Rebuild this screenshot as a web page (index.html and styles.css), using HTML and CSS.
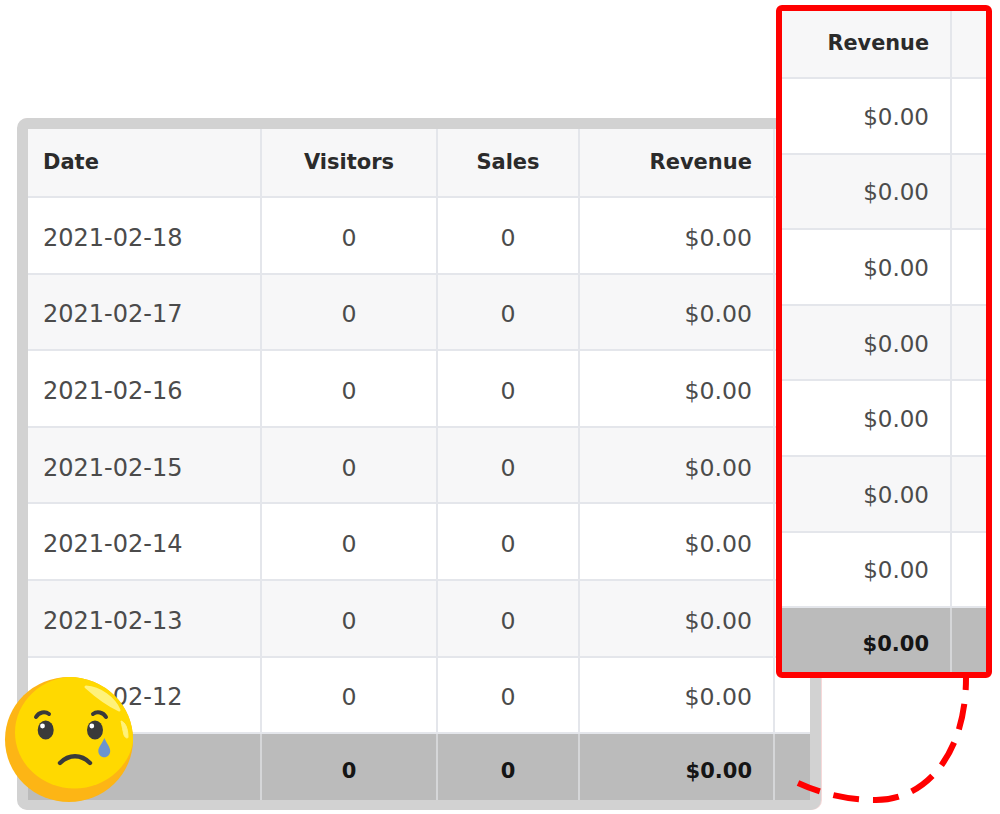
FILE: index.html
```html
<!DOCTYPE html>
<html lang="en">
<head>
<meta charset="utf-8">
<title>Report</title>
<link rel="stylesheet" href="styles.css">
</head>
<body>
<main class="stage">
  <section class="frame">
    <div class="row head"><div class="cell date">Date</div><div class="cell vis">Visitors</div><div class="cell sal">Sales</div><div class="cell rev">Revenue</div><div class="cell end"></div></div>
    <div class="row"><div class="cell date">2021-02-18</div><div class="cell vis">0</div><div class="cell sal">0</div><div class="cell rev">$0.00</div><div class="cell end"></div></div>
    <div class="row alt"><div class="cell date">2021-02-17</div><div class="cell vis">0</div><div class="cell sal">0</div><div class="cell rev">$0.00</div><div class="cell end"></div></div>
    <div class="row"><div class="cell date">2021-02-16</div><div class="cell vis">0</div><div class="cell sal">0</div><div class="cell rev">$0.00</div><div class="cell end"></div></div>
    <div class="row alt"><div class="cell date">2021-02-15</div><div class="cell vis">0</div><div class="cell sal">0</div><div class="cell rev">$0.00</div><div class="cell end"></div></div>
    <div class="row"><div class="cell date">2021-02-14</div><div class="cell vis">0</div><div class="cell sal">0</div><div class="cell rev">$0.00</div><div class="cell end"></div></div>
    <div class="row alt"><div class="cell date">2021-02-13</div><div class="cell vis">0</div><div class="cell sal">0</div><div class="cell rev">$0.00</div><div class="cell end"></div></div>
    <div class="row"><div class="cell date">2021-02-12</div><div class="cell vis">0</div><div class="cell sal">0</div><div class="cell rev">$0.00</div><div class="cell end"></div></div>
    <div class="row foot"><div class="cell date"></div><div class="cell vis">0</div><div class="cell sal">0</div><div class="cell rev">$0.00</div><div class="cell end"></div></div>
  </section>

  <svg class="curve" viewBox="0 0 1000 814" aria-hidden="true">
    <path d="M966 678C966 755 925 800 876 800C848 800 822 794 798 783" />
  </svg>

  <aside class="zoom">
    <div class="zrow head"><div class="cell zrev">Revenue</div><div class="cell zend"></div></div>
    <div class="zrow"><div class="cell zrev">$0.00</div><div class="cell zend"></div></div>
    <div class="zrow alt"><div class="cell zrev">$0.00</div><div class="cell zend"></div></div>
    <div class="zrow"><div class="cell zrev">$0.00</div><div class="cell zend"></div></div>
    <div class="zrow alt"><div class="cell zrev">$0.00</div><div class="cell zend"></div></div>
    <div class="zrow"><div class="cell zrev">$0.00</div><div class="cell zend"></div></div>
    <div class="zrow alt"><div class="cell zrev">$0.00</div><div class="cell zend"></div></div>
    <div class="zrow"><div class="cell zrev">$0.00</div><div class="cell zend"></div></div>
    <div class="zrow foot"><div class="cell zrev">$0.00</div><div class="cell zend"></div></div>
  </aside>

  <svg class="emoji" viewBox="0 660 160 154" aria-hidden="true">
    <defs><clipPath id="face"><ellipse cx="69" cy="739.5" rx="64" ry="62.5"/></clipPath></defs>
    <ellipse cx="69" cy="739.5" rx="64" ry="62.5" fill="#fdb515"/>
    <ellipse cx="74.5" cy="732.5" rx="59.5" ry="56" fill="#ffd900" clip-path="url(#face)"/>
    <path d="M86 687C100 688 114 698 119 710C108 705 96 696 86 687Z" fill="#fff27a" stroke="#fff27a" stroke-width="3" stroke-linejoin="round"/>
    <path d="M121 721C125 722 128 728 128 737C128 739 125 738 124 735C123 731 122 726 121 721Z" fill="#fff27a" stroke="#fff27a" stroke-linejoin="round"/>
    <ellipse cx="45.7" cy="730" rx="8" ry="9.5" fill="#3a3a3a"/>
    <ellipse cx="95" cy="730" rx="8" ry="9.5" fill="#3a3a3a"/>
    <circle cx="42.5" cy="726" r="2.4" fill="#fff"/>
    <circle cx="91.8" cy="726" r="2.4" fill="#fff"/>
    <path d="M36 717C39 712 45 711 49 714M93 714C97 711 103 712 106 717" fill="none" stroke="#3a3a3a" stroke-width="4" stroke-linecap="round"/>
    <path d="M60 763C69 754 81 754 90 763" fill="none" stroke="#3a3a3a" stroke-width="4.4" stroke-linecap="round"/>
    <path d="M104.3 738C107 744 110.2 747 110.2 751C110.2 754.5 107.5 757.3 104.3 757.3C101 757.3 98.3 754.5 98.3 751C98.3 747 102 744 104.3 738Z" fill="#6c94cc"/>
  </svg>
</main>
</body>
</html>
```
FILE: styles.css
```css
* { box-sizing: border-box; }
html, body { margin: 0; padding: 0; background: #fff; }
body { font-family: "DejaVu Sans", sans-serif; color: #4b4b4b; font-size: 23.6px; }

.stage { position: relative; width: 1000px; height: 814px; padding: 118px 0 0 17px; overflow: hidden; }

.frame {
  width: 804px;
  height: 692px;
  border: 11px solid #d2d2d2;
  border-radius: 10px;
  background: #fff;
  box-shadow: 1px 0 0 #f6d8d8;
}

.row { display: flex; height: 76.6px; }
.row.head { height: 69px; }
.row.foot { height: 65.8px; }
.row.alt, .zrow.alt, .head { background: #f7f7f8; }
.foot { background: #bbbbbb; }

.cell {
  display: flex;
  align-items: center;
  padding-top: 5px;
  border-right: 2px solid #e4e6eb;
  border-bottom: 2px solid #e4e6eb;
}
.head .cell { font-size: 21px; font-weight: 700; color: #2b2b2b; padding-top: 0; padding-bottom: 1px; }
.foot .cell { font-size: 21px; font-weight: 700; color: #151515; border-bottom: 0; border-right-color: #d5d6d8; padding-top: 7px; }

.date { width: 234px; padding-left: 15px; font-size: 24px; }
.vis { width: 176px; justify-content: center; }
.sal { width: 142px; justify-content: center; }
.rev { width: 195px; justify-content: flex-end; padding-right: 21px; }
.end { flex: 1; border-right: 0; }

.curve { position: absolute; left: 0; top: 0; width: 1000px; height: 814px; fill: none; }
.curve path { stroke: #ff0000; stroke-width: 6; stroke-dasharray: 26 14; stroke-dashoffset: 14; }

.zoom {
  position: absolute;
  left: 776px;
  top: 5px;
  width: 216px;
  height: 673px;
  border: 6px solid #ff0000;
  border-radius: 6px;
  background: #fff;
  overflow: hidden;
}
.zrow { display: flex; height: 75.6px; font-size: 23px; }
.zrow.head { height: 68px; }
.zrow.foot { height: 65.8px; }
.zrow .cell { padding-top: 2px; }
.zrow.head .cell { padding-top: 0; padding-bottom: 3px; font-size: 20.8px; }
.zrow.foot .cell { padding-top: 5px; }
.zrev { width: 170px; justify-content: flex-end; padding-right: 21px; }
.zend { flex: 1; border-right: 0; }

.emoji { position: absolute; left: 0; top: 660px; width: 160px; height: 154px; }
```
